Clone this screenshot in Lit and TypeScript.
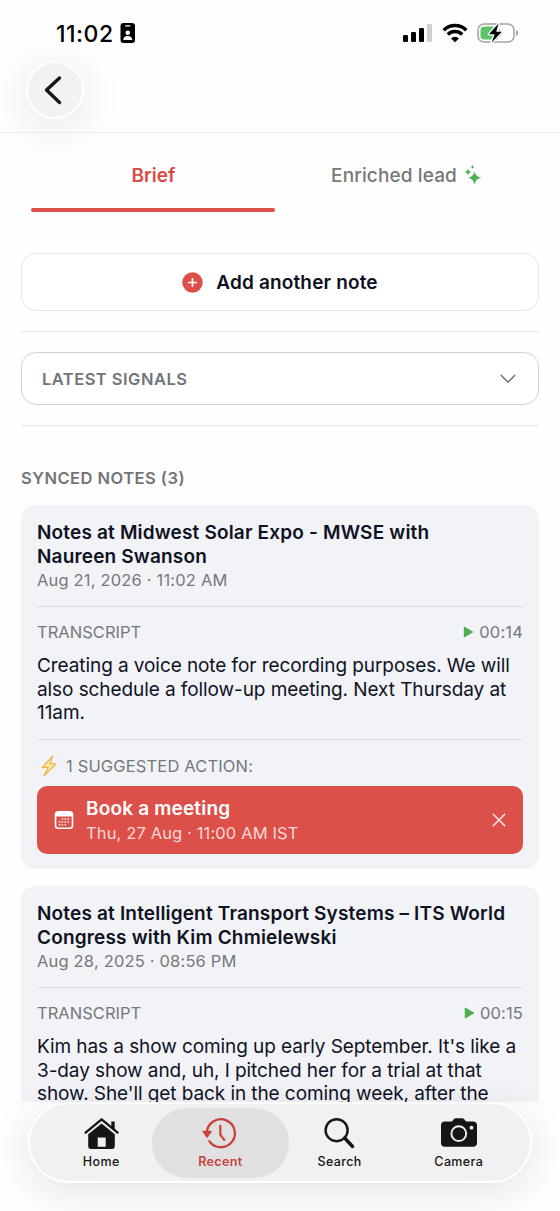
import { LitElement, html, css, svg, nothing } from "lit";
import { customElement, property } from "lit/decorators.js";

interface Action { title: string; when: string; }
interface Note { title: string[]; date: string; duration: string; body: string[]; action?: Action; }

const NOTES: Note[] = [
  {
    title: ["Notes at Midwest Solar Expo - MWSE with", "Naureen Swanson"],
    date: "Aug 21, 2026 · 11:02 AM",
    duration: "00:14",
    body: ["Creating a voice note for recording purposes. We will", "also schedule a follow-up meeting. Next Thursday at", "11am."],
    action: { title: "Book a meeting", when: "Thu, 27 Aug · 11:00 AM IST" },
  },
  {
    title: ["Notes at Intelligent Transport Systems – ITS World", "Congress with Kim Chmielewski"],
    date: "Aug 28, 2025 · 08:56 PM",
    duration: "00:15",
    body: ["Kim has a show coming up early September. It's like a", "3-day show and, uh, I pitched her for a trial at that", "show. She'll get back in the coming week, after the"],
  },
];

const lines = (rows: string[]) => rows.map((r) => html`<span class="line">${r}</span>`);

@customElement("note-card")
class NoteCard extends LitElement {
  @property({ attribute: false }) note!: Note;

  static styles = css`
    :host { display: block; background: #f1f3f7; border-radius: 14px; padding: 16px 16px 15px; }
    .line { display: block; white-space: nowrap; }
    .title { font-size: 19px; line-height: 23.6px; font-weight: 600; letter-spacing: 0.17px; color: #10121f; }
    .date { font-size: 16.5px; line-height: 22px; margin-top: 1px; color: #77787b; letter-spacing: 0.18px; white-space: nowrap; }
    .rule { height: 1px; background: #dcdee2; }
    .first { margin-top: 15px; }
    .row { display: flex; justify-content: space-between; align-items: center; height: 22px; margin-top: 14px; font-size: 16.5px; color: #77787b; }
    .label { letter-spacing: 0.03px; }
    .time { letter-spacing: 0.15px; }
    .play { display: flex; align-items: center; gap: 5px; }
    .body { margin-top: 11px; font-size: 19px; line-height: 23.6px; color: #10121f; letter-spacing: -0.08px; }
    .second { margin-top: 14px; }
    .suggest { display: flex; align-items: center; height: 22px; margin-top: 15px; font-size: 16.5px; letter-spacing: 0.15px; color: #77787b; gap: 8px; padding-left: 3px; white-space: nowrap; }
    .action { display: flex; align-items: center; height: 68px; margin-top: 9px; background: #dd5049; border-radius: 10px; color: #fff; padding: 0 17px; box-sizing: border-box; }
    .text { flex: 1; margin-left: 12px; white-space: nowrap; padding-top: 2px; }
    .name { font-size: 19px; font-weight: 600; line-height: 24px; letter-spacing: 0.18px; }
    .when { font-size: 16.5px; line-height: 24px; color: #f8d9d7; letter-spacing: 0.13px; }
    svg { display: block; flex: none; }
  `;

  render() {
    const n = this.note;
    return html`
      <div class="title">${lines(n.title)}</div>
      <div class="date">${n.date}</div>
      <div class="rule first"></div>
      <div class="row">
        <span class="label">TRANSCRIPT</span>
        <span class="play">
          <svg width="11" height="12" viewBox="0 0 11 12"><path d="M.8 1.2v9.6q0 .8.8.4l8.2-4.6q.9-.6 0-1.2L1.6.8Q.8.4.8 1.2z" fill="#4caf50"/></svg>
          <span class="time">${n.duration}</span>
        </span>
      </div>
      <div class="body">${lines(n.body)}</div>
      ${n.action ? html`
        <div class="rule second"></div>
        <div class="suggest">
          <svg width="18" height="22" viewBox="0 0 18 22"><path d="M12.8 1 2.2 12.4h6L4 20.8 16 8.8H9.8z" fill="#fbe7a1" stroke="#f0ad3c" stroke-width="1.1" stroke-linejoin="round"/></svg>
          <span class="count">1 SUGGESTED ACTION:</span>
        </div>
        <div class="action">
          <svg width="20" height="20" viewBox="0 0 20 20">
            <rect x="1.5" y="1.7" width="17" height="16.6" rx="2.8" fill="none" stroke="#fff" stroke-width="1.6"/>
            <path d="M1.5 6.4V4q0-2.3 2.3-2.3h12.4q2.3 0 2.3 2.3v2.4z" fill="#fff"/>
            <g fill="#fff">${[
              [7.7, 8.3], [10.6, 8.3], [13.5, 8.3],
              [4.8, 11.2], [7.7, 11.2], [10.6, 11.2], [13.5, 11.2],
              [4.8, 14.1], [7.7, 14.1], [10.6, 14.1],
            ].map(([x, y]) => svg`<rect x=${x} y=${y} width="1.5" height="1.5" rx=".3"/>`)}</g>
          </svg>
          <div class="text"><div class="name">${n.action.title}</div><div class="when">${n.action.when}</div></div>
          <svg width="14" height="14" viewBox="0 0 14 14"><path d="M1.3 1.3 12.7 12.7M12.7 1.3 1.3 12.7" stroke="#fbe4e2" stroke-width="1.6" stroke-linecap="round"/></svg>
        </div>` : nothing}
    `;
  }
}

const homeIcon = svg`
  <path d="M2.6 17.6 18.6 4.4l16 13.2" fill="none" stroke="#161616" stroke-width="2.4" stroke-linecap="round" stroke-linejoin="round"/>
  <path d="M28.3 7.2q0-.6.6-.6h2.2q.6 0 .6.6v7.3l-3.4-2.8z" fill="#161616"/>
  <path fill-rule="evenodd" d="M18.6 8.4 31.8 19.2V31.6q0 2.3-2.3 2.3h-22q-2.3 0-2.3-2.3V19.2zM14.7 22.6v9.2h8V22.6z" fill="#161616"/>`;
const recentIcon = svg`
  <path d="M4.9 17.5A14 14 0 1 1 7.3 26.1" fill="none" stroke="#c9403a" stroke-width="2.3" stroke-linecap="round"/>
  <path d="M1 16.4h8.2L5.1 22.2z" fill="#c9403a" stroke="#c9403a" stroke-width="1.2" stroke-linejoin="round"/>
  <path d="M18.3 10.8v8.8l3.9 5.2" fill="none" stroke="#c9403a" stroke-width="2.2" stroke-linecap="round" stroke-linejoin="round"/>`;
const searchIcon = svg`
  <circle cx="14.6" cy="15.2" r="11" fill="none" stroke="#161616" stroke-width="2.4"/>
  <path d="m22.6 23 8 8.5" stroke="#161616" stroke-width="3.4" stroke-linecap="round"/>`;
const cameraIcon = svg`
  <path d="M4 6.5h7l1.7-2.3Q13.5 3.2 15 3.2h6q1.5 0 2.3 1L25 6.5h7q4 0 4 4v17.3q0 4-4 4H4q-4 0-4-4V10.5q0-4 4-4z" fill="#161616"/>
  <circle cx="17.8" cy="18.6" r="7.4" fill="none" stroke="#f1f1f1" stroke-width="1.9"/>
  <circle cx="30.5" cy="12.7" r="1.9" fill="#f1f1f1"/>`;

const TABS = [
  { label: "Home", icon: homeIcon, active: false },
  { label: "Recent", icon: recentIcon, active: true },
  { label: "Search", icon: searchIcon, active: false },
  { label: "Camera", icon: cameraIcon, active: false },
];

@customElement("app-root")
class AppRoot extends LitElement {
  static styles = css`
    :host { display: flex; flex-direction: column; width: 560px; height: 1211px; overflow: hidden; background: #fefefe; font-family: Inter, "Liberation Sans", sans-serif; }
    svg { display: block; flex: none; }
    .status { display: flex; align-items: center; height: 61px; padding: 5px 41px 0 56px; box-sizing: border-box; flex: none; }
    .clock { font-size: 23px; font-weight: 550; letter-spacing: 0.5px; width: 64px; white-space: nowrap; color: #000; padding-top: 1px; }
    .spacer { flex: 1; }
    .signals { display: flex; align-items: center; gap: 9px; }
    .header { height: 72px; box-sizing: border-box; border-bottom: 1px solid #f0f0f0; padding: 0 26px; flex: none; }
    .back { width: 58px; height: 58px; box-sizing: border-box; border-radius: 50%; border: 2px solid #fff; background: #f2f2f2; box-shadow: 0 8px 44px rgba(0, 0, 0, 0.1); display: flex; align-items: center; justify-content: center; padding-right: 5px; }
    .main { height: 969px; overflow: hidden; flex: none; }
    .tabs { display: grid; grid-template-columns: 243px 243px; justify-content: space-between; padding: 0 32px; }
    .tab { height: 79px; box-sizing: border-box; display: flex; justify-content: center; align-items: center; gap: 7px; font-size: 19px; font-weight: 500; letter-spacing: 0.12px; color: #777; padding-top: 9px; border-bottom: 4px solid transparent; white-space: nowrap; }
    .selected { color: #d84c45; font-weight: 580; letter-spacing: 0.05px; }
    .bar { height: 4px; width: 244px; border-radius: 2px; background: #dc5049; margin: -4.5px 0 0 31px; }
    .stack { padding: 0 21px; }
    .add { height: 58px; box-sizing: border-box; margin-top: 41.5px; border: 1.5px solid #e4e6e7; border-radius: 15px; display: flex; align-items: center; justify-content: center; gap: 13px; font-size: 19px; font-weight: 580; letter-spacing: 0.15px; color: #10121f; background: #fff; }
    .divider { height: 1px; background: #e6e8e9; margin: 20px 0; }
    .latest { height: 53px; box-sizing: border-box; border: 1.5px solid #d0d1d2; border-radius: 15px; display: flex; align-items: center; justify-content: space-between; padding: 0 22px 0 20px; font-size: 16.5px; font-weight: 600; letter-spacing: 0.47px; color: #737477; background: #fff; }
    .synced { margin-top: 42px; height: 20px; line-height: 20px; font-size: 16.5px; font-weight: 600; letter-spacing: 0.47px; color: #737477; }
    .cards { display: flex; flex-direction: column; gap: 17px; margin-top: 17px; }
    .footer { flex: 1; padding: 0 28px; background: #fefefe; }
    .pill { position: relative; height: 81px; box-sizing: border-box; border-radius: 41px; border: 2px solid #fff; background: #f1f1f1; box-shadow: 0 8px 40px rgba(0, 0, 0, 0.11); display: grid; grid-template-columns: repeat(4, 119.2px); justify-content: center; align-items: center; }
    .item { height: 70px; margin: 0 -9px; border-radius: 35px; display: flex; flex-direction: column; align-items: center; padding-top: 7px; box-sizing: border-box; color: #161616; font-size: 12.5px; font-weight: 550; letter-spacing: 0.38px; line-height: 16px; gap: 3px; }
    .current { background: #e0e0e0; color: #c9403a; font-weight: 600; }
  `;

  render() {
    return html`
      <div class="status">
        <span class="clock">11:02</span>
        <svg width="16" height="20" viewBox="0 0 16 20">
          <rect x=".5" y="0" width="14.5" height="20" rx="3" fill="#000"/>
          <rect x="5" y="2.2" width="5.5" height="1.2" rx=".6" fill="#fff"/>
          <circle cx="7.75" cy="9.8" r="2.3" fill="#fff"/><path d="M3.2 17q.3-4 4.55-4t4.55 4z" fill="#fff"/>
        </svg>
        <span class="spacer"></span>
        <div class="signals">
          <svg width="30" height="20" viewBox="0 0 30 20">
            <rect x="0" y="12" width="5" height="7" rx="1.3"/><rect x="8" y="9" width="5" height="10" rx="1.3"/><rect x="16" y="5" width="5" height="14" rx="1.3"/><rect x="24" y="1" width="5" height="18" rx="1.3" fill="#cfcfcf"/>
          </svg>
          <svg width="26" height="20" viewBox="0 0 26 20">
            <path d="M1.7 7.2a16 16 0 0 1 22.6 0M5.8 11.5a10.2 10.2 0 0 1 14.4 0" fill="none" stroke="#000" stroke-width="3.5"/>
            <path d="M13 19.2 9 15.4a5.8 5.8 0 0 1 8 0z"/>
          </svg>
          <svg width="42" height="22" viewBox="0 0 42 22">
            <rect x="1" y="2" width="36" height="18" rx="6" fill="#fff" stroke="#a3a3a3" stroke-width="1.5"/>
            <path d="M7.5 4.5H21v13H7.5q-4 0-4-4v-5q0-4 4-4z" fill="#5cc568"/>
            <path d="M22 7q3 1.5 3 4t-3 4z" fill="#5cc568"/>
            <path d="M39 8q2.2.6 2.2 3T39 14z" fill="#a3a3a3"/>
            <path d="M21.5 1.5 12 12.2h5.6L14.8 20.5 24.8 9.7H19.2z" fill="#000" stroke="#fff" stroke-width="2.6" paint-order="stroke" stroke-linejoin="round"/>
          </svg>
        </div>
      </div>
      <div class="header"><div class="back">
        <svg width="20" height="30" viewBox="0 0 20 30"><path d="M16.5 3 3.5 15l13 12.5" fill="none" stroke="#161616" stroke-width="3.4" stroke-linecap="round" stroke-linejoin="round"/></svg>
      </div></div>
      <div class="main">
        <div class="tabs">
          <div class="tab selected">Brief</div>
          <div class="tab"><span class="enriched">Enriched lead</span>
            <svg width="18" height="20" viewBox="0 0 18 20" fill="#4caf50"><path d="M10.5 6q.8 5.7 6.9 6.8-6.1 1.1-6.9 6.9-.8-5.8-6.6-6.9 5.8-1.1 6.6-6.8zM4 3.3q.4 3.1 3.3 3.6Q4.4 7.4 4 10.5 3.6 7.4.5 6.9 3.6 6.4 4 3.3zM8.5 0q.2 1.7 2 2-1.8.3-2 2-.2-1.7-2-2 1.8-.3 2-2z"/></svg>
          </div>
        </div>
        <div class="bar"></div>
        <div class="stack">
          <div class="add">
            <svg width="21" height="21" viewBox="0 0 22 22"><circle cx="11" cy="11" r="10.7" fill="#dc5049"/><path d="M11 7v8M7 11h8" stroke="#fff" stroke-width="1.8" stroke-linecap="round"/></svg>
            <span class="addtext">Add another note</span>
          </div>
          <div class="divider"></div>
          <div class="latest"><span class="cap">LATEST SIGNALS</span>
            <svg width="16" height="10" viewBox="0 0 16 10"><path d="m1.2 1.2 6.8 7 6.8-7" fill="none" stroke="#6b6c70" stroke-width="1.4" stroke-linecap="round" stroke-linejoin="round"/></svg>
          </div>
          <div class="divider"></div>
          <div class="synced">SYNCED NOTES (3)</div>
          <div class="cards">${NOTES.map((n) => html`<note-card .note=${n}></note-card>`)}</div>
        </div>
      </div>
      <div class="footer"><div class="pill">
        ${TABS.map((t) => html`<div class="item ${t.active ? "current" : ""}">
          <svg width="36" height="36" viewBox="0 0 36 36">${t.icon}</svg><span>${t.label}</span>
        </div>`)}
      </div></div>
    `;
  }
}
